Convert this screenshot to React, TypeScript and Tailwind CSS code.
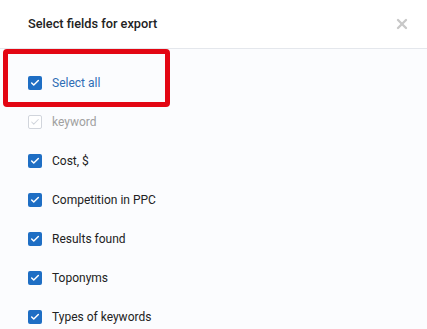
import { Check, X } from "lucide-react";

const fields = [
  { label: "keyword", disabled: true },
  { label: "Cost, $" },
  { label: "Competition in PPC" },
  { label: "Results found" },
  { label: "Toponyms" },
  { label: "Types of keywords" },
];

function Box({ disabled }: { disabled?: boolean }) {
  if (disabled) {
    return (
      <div className="w-[14px] h-[14px] rounded-[2px] border border-gray-300 bg-white flex items-center justify-center shrink-0">
        <Check className="w-[10px] h-[10px] text-gray-300" strokeWidth={2.5} />
      </div>
    );
  }
  return (
    <div className="w-[14px] h-[14px] rounded-[2px] bg-[#1e6ec4] flex items-center justify-center shrink-0">
      <Check className="w-[10px] h-[10px] text-white" strokeWidth={3.5} />
    </div>
  );
}

export default function App() {
  return (
    <div className="w-[427px] h-[329px] overflow-hidden bg-[#fbfcfe] relative" style={{ fontFamily: "Roboto, 'Liberation Sans', sans-serif" }}>
      {/* Header */}
      <div className="h-[49px] bg-white border-b border-[#e4e7ec] flex items-center justify-between pl-[28px] pr-[17px]">
        <span className="text-[12.75px] font-medium text-[#222]">Select fields for export</span>
        <X className="w-[16px] h-[16px] text-[#c8c8c8]" strokeWidth={3.5} />
      </div>

      {/* Field list */}
      <div className="pt-[14px] pl-[28px]">
        <label className="h-[39px] flex items-center gap-[10px]">
          <Box />
          <span className="text-[12px] text-[#2f6db5]">Select all</span>
        </label>
        {fields.map((f) => (
          <label key={f.label} className="h-[39px] flex items-center gap-[10px]">
            <Box disabled={f.disabled} />
            <span className={`text-[12px] ${f.disabled ? "text-[#a0a0a0]" : "text-[#222]"}`}>{f.label}</span>
          </label>
        ))}
      </div>

      {/* Highlight marker */}
      <div className="absolute left-[3px] top-[49px] w-[167px] h-[58px] border-[5px] border-[#e30613] rounded-[4px]" />
    </div>
  );
}
